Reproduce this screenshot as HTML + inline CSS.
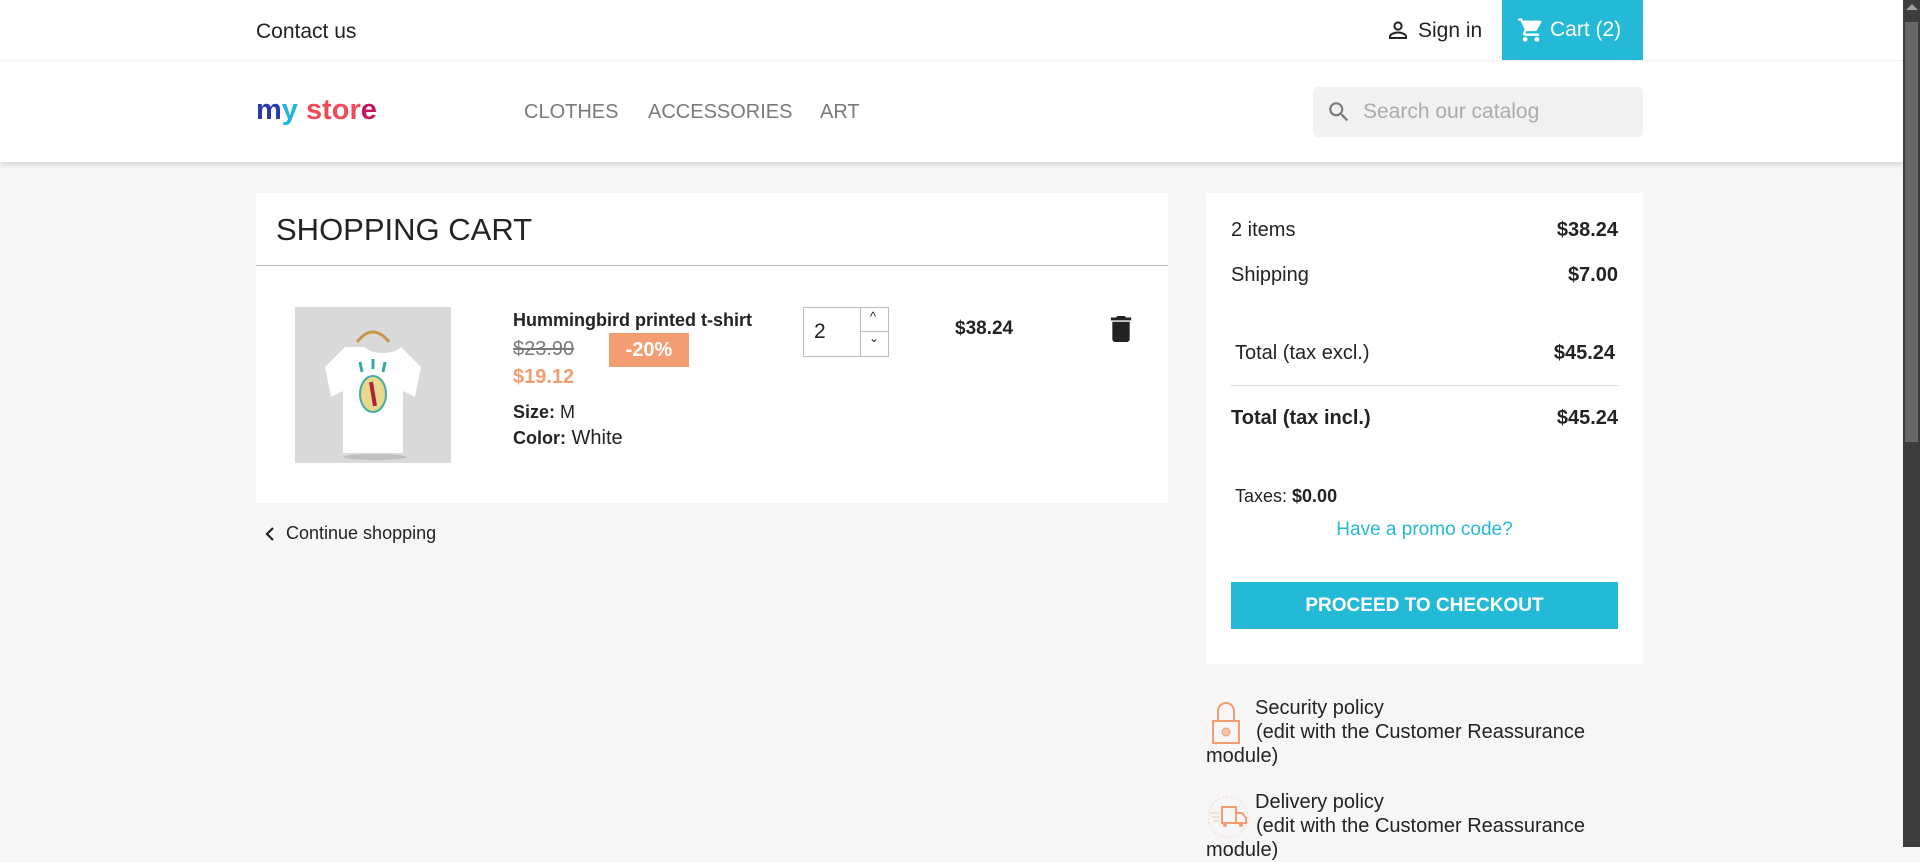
<!DOCTYPE html>
<html><head><meta charset="utf-8"><style>
*{box-sizing:border-box;margin:0;padding:0}
body{width:1920px;height:847px;overflow:hidden;background:#f6f6f6;font-family:"Liberation Sans",sans-serif;color:#232323;position:relative}
.abs{position:absolute}
.top{left:0;top:0;width:1903px;height:61px;background:#fff;border-bottom:1px solid #f1f1f1}
.hdr{left:0;top:61px;width:1903px;height:101px;background:#fff;box-shadow:0 3px 5px rgba(0,0,0,.12)}
.menu{font-size:20px;color:#7a7a7a;top:101px}
.scroll{left:1903px;top:0;width:17px;height:847px;background:#3d3d3d}
.thumb{left:1905px;top:22px;width:13px;height:420px;background:#686868}
.card{background:#fff}
.row{position:absolute;font-size:20px;line-height:24px}
</style></head><body>
<div class="abs top"></div>
<div class="abs" style="left:256px;top:20px;font-size:21px">Contact us</div>
<svg class="abs" style="left:1386px;top:18px" width="24" height="24" viewBox="0 0 24 24"><circle cx="12" cy="8" r="3.6" fill="none" stroke="#232323" stroke-width="2"/><path d="M4 20v-1.5c0-2.5 5-4 8-4s8 1.5 8 4V20z" fill="none" stroke="#232323" stroke-width="2"/></svg>
<div class="abs" style="left:1418px;top:19px;font-size:21px">Sign in</div>
<div class="abs" style="left:1502px;top:0;width:141px;height:60px;background:#24b9d7"></div>
<svg class="abs" style="left:1517px;top:16px" width="28" height="28" viewBox="0 0 24 24"><path fill="#fff" d="M7 18c-1.1 0-2 .9-2 2s.9 2 2 2 2-.9 2-2-.9-2-2-2zM1 2v2h2l3.6 7.6-1.4 2.4c-.1.3-.2.6-.2 1 0 1.1.9 2 2 2h12v-2H7.4c-.1 0-.2-.1-.2-.2v-.1l.9-1.7h7.4c.8 0 1.4-.4 1.7-1l3.6-6.5c.1-.2.1-.3.1-.5 0-.6-.4-1-1-1H5.2l-.9-2H1zm16 16c-1.1 0-2 .9-2 2s.9 2 2 2 2-.9 2-2-.9-2-2-2z"/></svg>
<div class="abs" style="left:1550px;top:18px;font-size:21px;color:#fff">Cart (2)</div>
<div class="abs hdr"></div>
<div class="abs" style="left:256px;top:94px;font-size:29px;font-weight:bold;letter-spacing:0px"><span style="color:#2a3aa8">m</span><span style="color:#1fb3dd">y</span> <span style="color:#ef4a5a">stor</span><span style="color:#c2185b">e</span></div>
<div class="abs menu" style="left:524px">CLOTHES</div>
<div class="abs menu" style="left:648px">ACCESSORIES</div>
<div class="abs menu" style="left:820px">ART</div>
<div class="abs" style="left:1313px;top:87px;width:330px;height:50px;background:#f1f1f1;border-radius:5px"></div>
<svg class="abs" style="left:1326px;top:99px" width="26" height="26" viewBox="0 0 24 24"><path fill="#7a7a7a" d="M15.5 14h-.8l-.3-.3A6.5 6.5 0 1 0 9.5 16c1.6 0 3.1-.6 4.2-1.6l.3.3v.8l5 5 1.5-1.5-5-5zm-6 0C7 14 5 12 5 9.5S7 5 9.5 5 14 7 14 9.5 12 14 9.5 14z"/></svg>
<div class="abs" style="left:1363px;top:100px;font-size:21px;color:#acacac">Search our catalog</div>

<div class="abs card" style="left:256px;top:193px;width:912px;height:310px"></div>
<div class="abs" style="left:276px;top:212px;font-size:31px;color:#232323">SHOPPING CART</div>
<div class="abs" style="left:256px;top:265px;width:912px;height:1px;background:#bdbdbd"></div>
<svg class="abs" style="left:295px;top:307px" width="156" height="156" viewBox="0 0 156 156"><rect width="156" height="156" fill="#d9d9d9"/><path d="M62 35q16-20 32 0" stroke="#c8964a" stroke-width="3" fill="none"/><path d="M50 40l-20 20 6 30 12-6v62h60V84l12 6 6-30-20-20c-6 8-30 8-36 0z" fill="#fff"/><ellipse cx="78" cy="87" rx="13" ry="18" fill="#e8d98c" stroke="#4aa" stroke-width="2"/><path d="M76 75l4 24" stroke="#b0243a" stroke-width="4"/><path d="M65 55l2 10M78 52v10M90 55l-2 10" stroke="#3aa" stroke-width="3"/><ellipse cx="80" cy="150" rx="32" ry="3" fill="#c0c0c0"/></svg>
<div class="abs" style="left:513px;top:310px;font-size:18px;font-weight:bold;color:#232323">Hummingbird printed t-shirt</div>
<div class="abs" style="left:513px;top:338px;font-size:20px;color:#7a7a7a;text-decoration:line-through">$23.90</div>
<div class="abs" style="left:609px;top:333px;width:80px;height:34px;background:#f39d72;color:#fff;font-size:20px;font-weight:bold;text-align:center;line-height:34px">-20%</div>
<div class="abs" style="left:513px;top:366px;font-size:20px;font-weight:bold;color:#f39d72">$19.12</div>
<div class="abs" style="left:513px;top:402px;font-size:18px"><b>Size:</b> M</div>
<div class="abs" style="left:513px;top:427px;font-size:20px"><b style="font-size:18px">Color:</b> White</div>
<div class="abs" style="left:803px;top:307px;width:86px;height:50px;border:1px solid #bdbdbd;background:#fff"></div>
<div class="abs" style="left:860px;top:307px;width:1px;height:50px;background:#bdbdbd"></div>
<div class="abs" style="left:860px;top:331px;width:29px;height:1px;background:#bdbdbd"></div>
<div class="abs" style="left:814px;top:320px;font-size:21px">2</div>
<div class="abs" style="left:870px;top:309px;font-size:13px">^</div>
<div class="abs" style="left:869px;top:331px;font-size:12px">&#8964;</div>
<div class="abs" style="left:955px;top:318px;font-size:19px;font-weight:bold">$38.24</div>
<svg class="abs" style="left:1110px;top:316px" width="22" height="26" viewBox="0 0 14 18"><path fill="#232323" d="M1 16c0 1.1.9 2 2 2h8c1.1 0 2-.9 2-2V4H1v12zM14 1h-3.5l-1-1h-5l-1 1H0v2h14V1z"/></svg>
<svg class="abs" style="left:265px;top:527px" width="10" height="14" viewBox="0 0 10 14"><path d="M8 1L2 7l6 6" fill="none" stroke="#232323" stroke-width="2.2"/></svg>
<div class="abs" style="left:286px;top:523px;font-size:18px">Continue shopping</div>

<div class="abs card" style="left:1206px;top:193px;width:437px;height:471px"></div>
<div class="row" style="left:1231px;top:218px">2 items</div>
<div class="row" style="left:1231px;top:218px;width:387px;text-align:right;font-weight:bold">$38.24</div>
<div class="row" style="left:1231px;top:263px">Shipping</div>
<div class="row" style="left:1231px;top:263px;width:387px;text-align:right;font-weight:bold">$7.00</div>
<div class="row" style="left:1235px;top:341px">Total (tax excl.)</div>
<div class="row" style="left:1231px;top:341px;width:384px;text-align:right;font-weight:bold">$45.24</div>
<div class="abs" style="left:1231px;top:385px;width:387px;height:1px;background:#ddd"></div>
<div class="row" style="left:1231px;top:406px;font-weight:bold">Total (tax incl.)</div>
<div class="row" style="left:1231px;top:406px;width:387px;text-align:right;font-weight:bold">$45.24</div>
<div class="row" style="left:1235px;top:484px;font-size:18px">Taxes: <b>$0.00</b></div>
<div class="row" style="left:1206px;top:518px;width:437px;text-align:center;color:#24b9d7;font-size:19px">Have a promo code?</div>
<div class="abs" style="left:1231px;top:582px;width:387px;height:47px;background:#24b9d7;color:#fff;font-weight:bold;font-size:19px;text-align:center;line-height:47px">PROCEED TO CHECKOUT</div>

<svg class="abs" style="left:1208px;top:701px" width="36" height="44" viewBox="0 0 36 44"><path d="M10 20V10a8 8 0 0 1 16 0v10" fill="none" stroke="#f39d72" stroke-width="2"/><rect x="5" y="20" width="26" height="22" fill="none" stroke="#f39d72" stroke-width="2"/><circle cx="18" cy="31" r="4" fill="#f8c3a8" stroke="#f39d72"/></svg>
<div class="abs" style="left:1255px;top:696px;font-size:20px;line-height:24px">Security policy</div>
<div class="abs" style="left:1206px;top:720px;font-size:20px;line-height:24px">&nbsp;&nbsp;&nbsp;&nbsp;&nbsp;&nbsp;&nbsp;&nbsp;&nbsp;(edit with the Customer Reassurance<br>module)</div>
<svg class="abs" style="left:1206px;top:795px" width="44" height="44" viewBox="0 0 44 44"><circle cx="22" cy="22" r="20" fill="none" stroke="#f8d8c8" stroke-dasharray="2 2"/><rect x="16" y="12" width="14" height="16" fill="none" stroke="#f39d72" stroke-width="2"/><path d="M30 18h6l4 5v5h-10z" fill="none" stroke="#f39d72" stroke-width="2"/><circle cx="19" cy="30" r="2" fill="#f39d72"/><circle cx="35" cy="30" r="2" fill="#f39d72"/><path d="M4 18h9M6 22h7M8 26h5" stroke="#f8c3a8"/></svg>
<div class="abs" style="left:1255px;top:790px;font-size:20px;line-height:24px">Delivery policy</div>
<div class="abs" style="left:1206px;top:814px;font-size:20px;line-height:24px">&nbsp;&nbsp;&nbsp;&nbsp;&nbsp;&nbsp;&nbsp;&nbsp;&nbsp;(edit with the Customer Reassurance<br>module)</div>

<div class="abs scroll"></div>
<div class="abs thumb"></div>
<div class="abs" style="left:1905px;top:4px;width:0;height:0;border-left:6px solid transparent;border-right:6px solid transparent;border-bottom:6px solid #a0a0a0;margin-left:1px"></div>
</body></html>
